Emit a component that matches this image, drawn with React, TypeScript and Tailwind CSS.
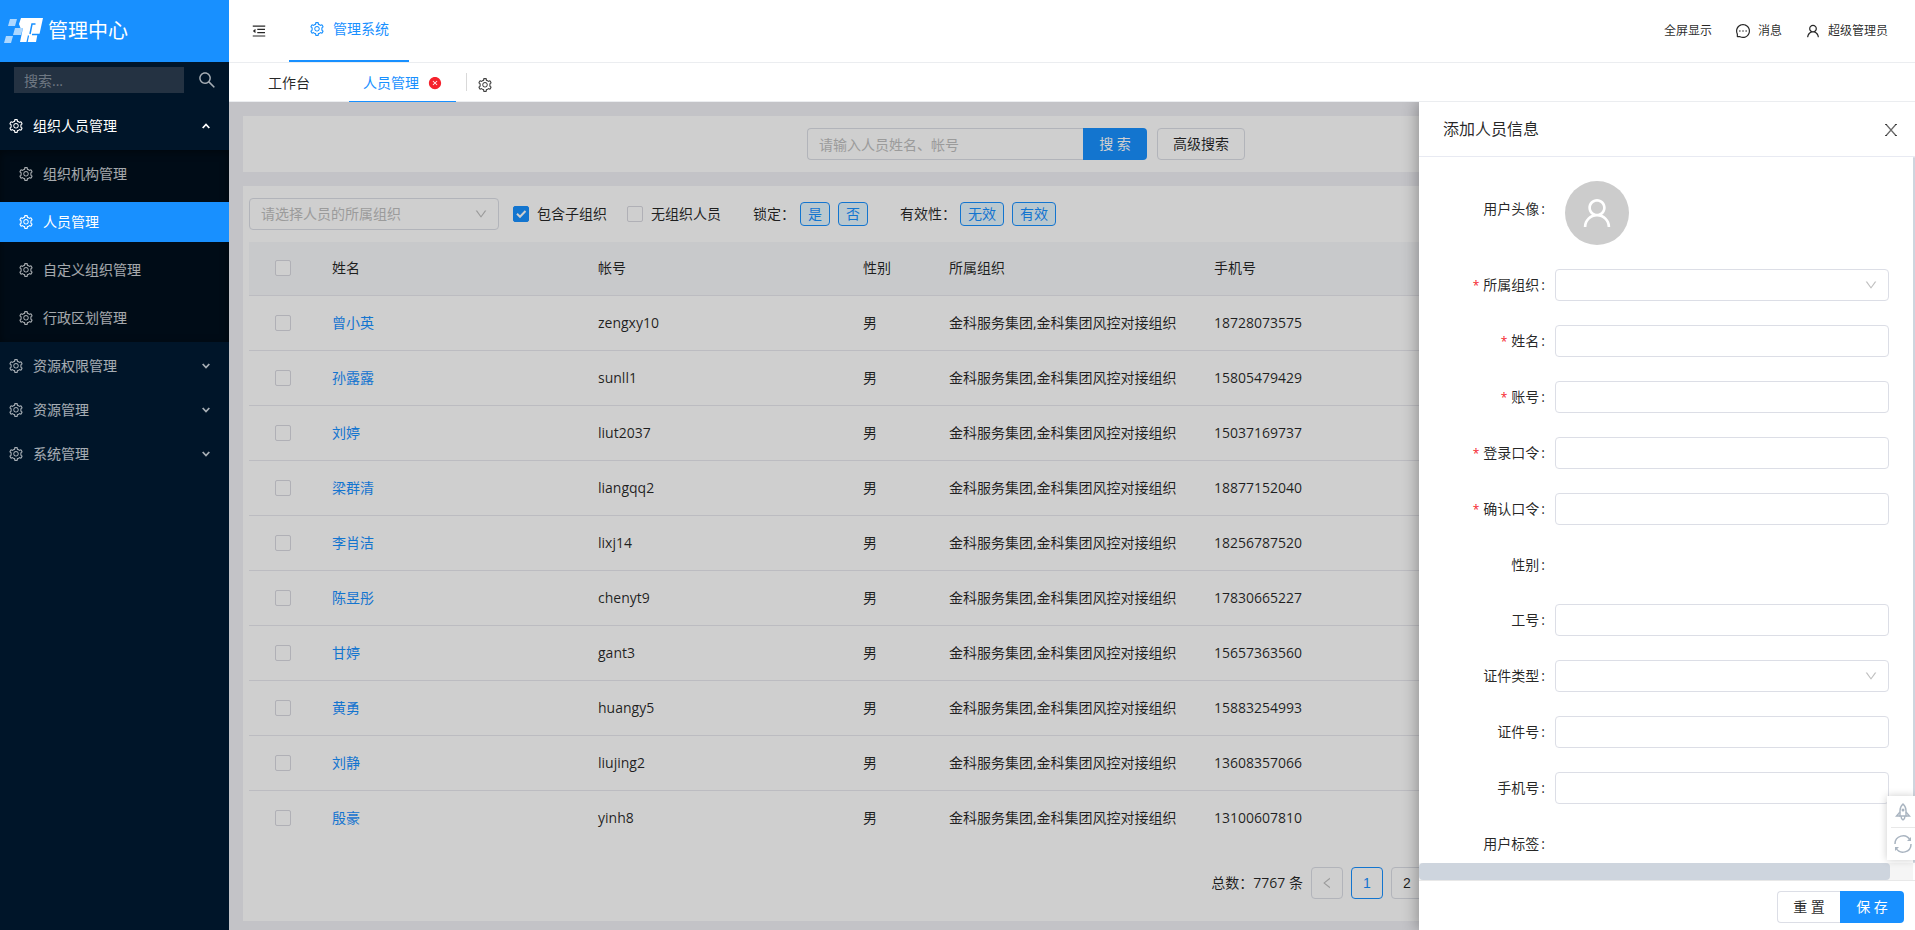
import type { ReactNode } from "react";
import {
  AiFillCloseCircle,
  AiOutlineDown,
  AiOutlineLeft,
  AiOutlineMenuFold,
  AiOutlineMessage,
  AiOutlineSearch,
  AiOutlineSetting,
  AiOutlineUser,
} from "react-icons/ai";

const subMenu = ["组织机构管理", "人员管理", "自定义组织管理", "行政区划管理"];
const menus = ["资源权限管理", "资源管理", "系统管理"];

const people = [
  { name: "曾小英", account: "zengxy10", phone: "18728073575" },
  { name: "孙露露", account: "sunll1", phone: "15805479429" },
  { name: "刘婷", account: "liut2037", phone: "15037169737" },
  { name: "梁群清", account: "liangqq2", phone: "18877152040" },
  { name: "李肖洁", account: "lixj14", phone: "18256787520" },
  { name: "陈昱彤", account: "chenyt9", phone: "17830665227" },
  { name: "甘婷", account: "gant3", phone: "15657363560" },
  { name: "黄勇", account: "huangy5", phone: "15883254993" },
  { name: "刘静", account: "liujing2", phone: "13608357066" },
  { name: "殷豪", account: "yinh8", phone: "13100607810" },
];

type Field = { id: string; label: string; type: "text" | "password" | "select" | "none"; required?: boolean };

const fields: Field[] = [
  { id: "org", label: "所属组织", type: "select", required: true },
  { id: "name", label: "姓名", type: "text", required: true },
  { id: "account", label: "账号", type: "text", required: true },
  { id: "password", label: "登录口令", type: "password", required: true },
  { id: "confirm", label: "确认口令", type: "password", required: true },
  { id: "gender", label: "性别", type: "none" },
  { id: "workNo", label: "工号", type: "text" },
  { id: "certType", label: "证件类型", type: "select" },
  { id: "certNo", label: "证件号", type: "text" },
  { id: "mobile", label: "手机号", type: "text" },
  { id: "tags", label: "用户标签", type: "none" },
];

function Logo() {
  return (
    <svg width="40" height="26" viewBox="0 0 40 26" aria-hidden="true">
      <path d="M6 1h7l-2 7H4z" fill="#fff" opacity=".65" />
      <path d="M11 10h8l-2 7H9z" fill="#fff" opacity=".65" />
      <path d="M2 18h7l-2 7H0z" fill="#fff" opacity=".65" />
      <path d="M17 0h22l-3.500 16h-2l-1.500 8H16l3-14h-2.500l-1.500-4z" fill="#fff" />
      <path d="M31.500 6h-3.500l-2 10M28 16.500h8" fill="none" stroke="#1890ff" strokeWidth="1.500" />
      <path d="M24.500 17.500l-1.500 7" fill="none" stroke="#1890ff" strokeWidth="1.200" />
    </svg>
  );
}

function Sidebar() {
  return (
    <aside className="flex w-[229px] shrink-0 flex-col bg-[#001529] text-white/65">
      <div className="flex h-[62px] items-center gap-1 bg-[#1890ff] pl-1 text-white">
        <Logo />
        <h1 className="text-xl leading-7">管理中心</h1>
      </div>
      <div className="flex items-center justify-between pt-[5px] pr-3 pl-3.5">
        <input
          type="text"
          aria-label="搜索"
          placeholder="搜索..."
          className="h-[26px] w-[170px] bg-[#243242] px-2.5 outline-none placeholder:text-[#6f7882]"
        />
        <button aria-label="搜索">
          <AiOutlineSearch className="size-5" />
        </button>
      </div>
      <nav className="mt-[13px] flex flex-col gap-1">
        <button className="flex h-10 items-center pr-[19px] pl-2 text-white">
          <AiOutlineSetting className="mr-[9px] size-4" />
          组织人员管理
          <Caret up />
        </button>
        <div className="flex flex-col gap-2 bg-[#000c17] py-1 shadow-[inset_0_2px_8px_rgba(0,0,0,0.45)]">
          {subMenu.map((item) => (
            <a
              key={item}
              href="#"
              className={`flex h-10 items-center gap-[9px] pl-[18px] ${item === "人员管理" ? "bg-[#1890ff] text-white" : ""}`}
            >
              <AiOutlineSetting className="size-4" />
              {item}
            </a>
          ))}
        </div>
        {menus.map((item) => (
          <button key={item} className="flex h-10 items-center pr-[19px] pl-2">
            <AiOutlineSetting className="mr-[9px] size-4" />
            {item}
            <Caret />
          </button>
        ))}
      </nav>
    </aside>
  );
}

function Caret({ up }: { up?: boolean }) {
  return (
    <svg width="8" height="6" viewBox="0 0 8 6" fill="none" stroke="currentColor" strokeWidth="1.8" className="ml-auto">
      <path d={up ? "M.7 5 4 1.5 7.3 5" : "M.7 1 4 4.5 7.3 1"} />
    </svg>
  );
}

function Header() {
  return (
    <header className="flex h-[63px] shrink-0 items-stretch justify-between border-b border-[#ebedf0] bg-white">
      <div className="flex">
        <button aria-label="收起菜单" className="px-[22px]">
          <AiOutlineMenuFold className="size-4" />
        </button>
        <a
          href="#"
          className="flex items-center gap-2 border-b-2 border-[#1890ff] px-5 pb-0.5 text-[#1890ff]"
        >
          <AiOutlineSetting className="size-4" />
          管理系统
        </a>
      </div>
      <div className="flex items-center gap-[23px] pr-[27px] text-xs">
        <button>全屏显示</button>
        <button className="flex items-center gap-[7px]">
          <AiOutlineMessage className="size-4" />
          消息
        </button>
        <button className="flex items-center gap-[7px]">
          <AiOutlineUser className="size-4" />
          超级管理员
        </button>
      </div>
    </header>
  );
}

function PageTabs() {
  return (
    <div className="flex h-[39px] shrink-0 items-stretch border-b border-[#ebedf0] bg-white pl-6">
      <button className="px-[15px] pt-0.5">工作台</button>
      <div className="-mb-px ml-6 flex items-center gap-[9px] border-b border-[#1890ff] px-3.5 pt-0.5 text-[#1890ff]">
        <a href="#">人员管理</a>
        <button aria-label="关闭" className="text-[#f5222d]">
          <AiFillCloseCircle className="size-3.5" />
        </button>
      </div>
      <button aria-label="设置" className="my-2.5 ml-2.5 border-l border-[#d9d9d9] pt-1 pl-2.5 text-black/75">
        <AiOutlineSetting className="size-4" />
      </button>
    </div>
  );
}

function CheckBox({ label, checked }: { label: string; checked?: boolean }) {
  return (
    <span className="relative block size-4">
      <input
        type="checkbox"
        aria-label={label}
        defaultChecked={checked}
        className="peer block size-4 appearance-none rounded-xs border border-[#d9d9e0] bg-white checked:border-[#1890ff] checked:bg-[#1890ff]"
      />
      <svg
        viewBox="0 0 16 16"
        fill="none"
        stroke="#fff"
        strokeWidth="2"
        className="pointer-events-none absolute inset-0 hidden peer-checked:block"
      >
        <path d="M4 7.700 7 10.800 12.500 5" />
      </svg>
    </span>
  );
}

function SelectBox({ id, label, children }: { id: string; label?: string; children?: ReactNode }) {
  return (
    <div className="relative flex-1">
      <select
        id={id}
        aria-label={label}
        className="block h-8 w-full appearance-none rounded border border-[#dcdee6] bg-white px-[11px] text-[#bfbfbf] outline-none"
      >
        {children}
      </select>
      <AiOutlineDown className="pointer-events-none absolute top-[9px] right-[11px] size-3.5 text-[#bfbfbf]" />
    </div>
  );
}

function Tag({ children }: { children: ReactNode }) {
  return (
    <button className="h-6 rounded border border-[#1890ff] bg-[#e6f7ff] px-[7px] leading-5 text-[#1890ff]">
      {children}
    </button>
  );
}

function PeopleTable() {
  return (
    <table className="mt-3 w-full table-fixed text-left">
      <thead>
        <tr className="h-[53px] border-b border-[#e8e8ee] bg-[#f7f8fa]">
          <th className="w-[67px] pl-[26px]">
            <CheckBox label="全选" />
          </th>
          <th className="w-[266px] px-4 font-normal">姓名</th>
          <th className="w-[265px] px-4 font-normal">帐号</th>
          <th className="w-[86px] px-4 font-normal">性别</th>
          <th className="w-[265px] px-4 font-normal">所属组织</th>
          <th className="px-4 font-normal">手机号</th>
        </tr>
      </thead>
      <tbody>
        {people.map((person) => (
          <tr key={person.account} className="h-[55px] border-b border-[#e8e8ee] last:border-b-0">
            <td className="pl-[26px]">
              <CheckBox label={person.name} />
            </td>
            <td className="px-4">
              <a href="#" className="text-[#1890ff]">
                {person.name}
              </a>
            </td>
            <td className="px-4">{person.account}</td>
            <td className="px-4">男</td>
            <td className="px-4 whitespace-nowrap">金科服务集团,金科集团风控对接组织</td>
            <td className="px-4">{person.phone}</td>
          </tr>
        ))}
      </tbody>
    </table>
  );
}

function Content() {
  return (
    <main className="flex min-h-0 flex-1 flex-col gap-3.5 overflow-hidden bg-[#f0f1f6] px-3.5 pt-3.5 pb-[9px]">
      <section className="flex items-center justify-center bg-white py-3 pr-[92px]">
        <input
          type="text"
          aria-label="人员姓名、帐号"
          placeholder="请输入人员姓名、帐号"
          className="h-8 w-[276px] rounded-l border border-r-0 border-[#dcdee6] bg-white px-[11px] outline-none placeholder:text-[#bfbfbf]"
        />
        <button className="h-8 w-16 rounded-r bg-[#1890ff] text-white">搜 索</button>
        <button className="ml-2.5 h-8 rounded border border-[#dcdee6] px-[15px]">高级搜索</button>
      </section>
      <section className="flex-1 bg-white px-1.5 pt-3">
        <div className="flex items-center">
          <div className="flex w-[250px]">
            <SelectBox id="filterOrg" label="所属组织">
              <option>请选择人员的所属组织</option>
            </SelectBox>
          </div>
          <label className="ml-3.5 flex items-center gap-2">
            <CheckBox label="包含子组织" checked />
            包含子组织
          </label>
          <label className="ml-5 flex items-center gap-2">
            <CheckBox label="无组织人员" />
            无组织人员
          </label>
          <div className="ml-8 flex items-center gap-2">
            <span className="-mr-[3px]">锁定：</span>
            <Tag>是</Tag>
            <Tag>否</Tag>
          </div>
          <div className="ml-8 flex items-center gap-2">
            <span className="-mr-1">有效性：</span>
            <Tag>无效</Tag>
            <Tag>有效</Tag>
          </div>
        </div>
        <PeopleTable />
        <div className="mt-[22px] flex items-center justify-end gap-2 pr-[472px]">
          <span>总数：7767 条</span>
          <button
            aria-label="上一页"
            className="flex size-8 items-center justify-center rounded border border-[#dcdee6] text-[#bfbfbf]"
          >
            <AiOutlineLeft className="size-3.5" />
          </button>
          <button className="size-8 rounded border border-[#1890ff] font-['Liberation_Sans',sans-serif] text-[#1890ff]">
            1
          </button>
          <button className="size-8 rounded border border-[#dcdee6] font-['Liberation_Sans',sans-serif]">2</button>
        </div>
      </section>
    </main>
  );
}

function FormRow({ field }: { field: Field }) {
  return (
    <div className="flex items-center">
      <label
        htmlFor={field.id}
        className={`w-28 pr-2 text-right ${field.type === "none" ? "leading-[31px]" : "leading-8"}`}
      >
        {field.required && <span className="mr-1 text-xs text-[#f5222d]">*</span>}
        {field.label}
        <span className="mx-[2px]">:</span>
      </label>
      {field.type === "select" && <SelectBox id={field.id} />}
      {(field.type === "text" || field.type === "password") && (
        <input
          id={field.id}
          type={field.type}
          className="h-8 min-w-0 flex-1 rounded border border-[#dcdee6] px-[11px] outline-none"
        />
      )}
    </div>
  );
}

function Drawer() {
  return (
    <section
      role="dialog"
      aria-label="添加人员信息"
      className="absolute inset-y-0 right-0 flex w-[496px] flex-col bg-white shadow-[-2px_0_14px_rgba(0,0,0,0.3)]"
    >
      <div className="flex h-[55px] shrink-0 items-center justify-between border-b border-[#e8eaf2] pr-[18px] pl-6">
        <h2 className="text-base leading-6">添加人员信息</h2>
        <button aria-label="关闭" className="pt-0.5 text-black/60">
          <svg width="12" height="12" viewBox="0 0 12 12" fill="none" stroke="currentColor" strokeWidth="1.3">
            <path d="M.8 0 11.200 12M11.200 0 .8 12" />
            <path d="M0 .5h1.800M10.200.5H12M0 11.500h1.800M10.200 11.500H12" strokeWidth="1" />
          </svg>
        </button>
      </div>
      <div className="flex min-h-0 flex-1">
        <div className="flex min-w-0 flex-1 flex-col">
          <form className="flex min-h-0 flex-1 flex-col gap-6 overflow-hidden pt-6 pr-6 pl-6">
            <div className="flex shrink-0 items-start">
              <span className="w-28 pr-2 text-right leading-[56px]">
                用户头像<span className="mx-[2px]">:</span>
              </span>
              <span className="ml-2.5 flex size-16 items-center justify-center rounded-full bg-[#ccc] text-white">
                <AiOutlineUser className="size-9" />
              </span>
            </div>
            {fields.map((field) => (
              <FormRow key={field.id} field={field} />
            ))}
          </form>
          <div className="h-[17px] shrink-0 bg-[#f5f5f5] pr-[23px]">
            <div className="h-full rounded bg-[#ced5de]" />
          </div>
        </div>
        <div className="mb-[17px] w-[2px] rounded bg-[#ced5de]" />
      </div>
      <div className="flex shrink-0 justify-end border-t border-[#e8e8e8] pt-2.5 pr-[11px] pb-[7px]">
        <button className="h-8 w-[63px] rounded-l border border-r-0 border-[#dcdee6]">重 置</button>
        <button className="h-8 w-16 rounded-r bg-[#1890ff] text-white">保 存</button>
      </div>
    </section>
  );
}

function FloatTools() {
  return (
    <div className="absolute right-0 bottom-[70px] flex w-7 flex-col bg-white pl-1 text-[#a9b4c0] shadow-[0_0_8px_rgba(0,0,0,0.2)]">
      <button aria-label="快捷入口" className="flex h-8 items-center justify-center border-b border-[#e8e8e8]">
        <svg width="16" height="18" viewBox="0 0 16 18" fill="none" stroke="currentColor" strokeWidth="1.4">
          <path d="M8 1C5.800 3 5 5 5 7.500V13h6V7.500C11 5 10.200 3 8 1z" />
          <path d="M5 9 1.500 13H5M11 9l3.500 4H11M6 13c0 2 .8 3.200 2 4 1.200-.8 2-2 2-4" />
          <circle cx="8" cy="7" r=".8" />
        </svg>
      </button>
      <button aria-label="刷新" className="flex h-8 items-center justify-center">
        <svg width="18" height="18" viewBox="0 0 18 18" fill="none" stroke="currentColor" strokeWidth="1.5">
          <path d="M1 9a8 8 0 0 1 15-4M17 9a8 8 0 0 1-15 4" />
          <path d="M17 2v4h-4zM1 16v-4h4z" fill="currentColor" stroke="none" />
        </svg>
      </button>
    </div>
  );
}

export default function App() {
  return (
    <div className="flex h-screen bg-white font-['Open_Sans','Noto_Sans_CJK_SC',sans-serif] text-sm text-black/85">
      <Sidebar />
      <div className="flex min-w-0 flex-1 flex-col">
        <Header />
        <PageTabs />
        <div className="relative flex min-h-0 flex-1 flex-col overflow-hidden">
          <Content />
          <div className="absolute inset-0 bg-black/19" />
          <Drawer />
          <FloatTools />
        </div>
      </div>
    </div>
  );
}
